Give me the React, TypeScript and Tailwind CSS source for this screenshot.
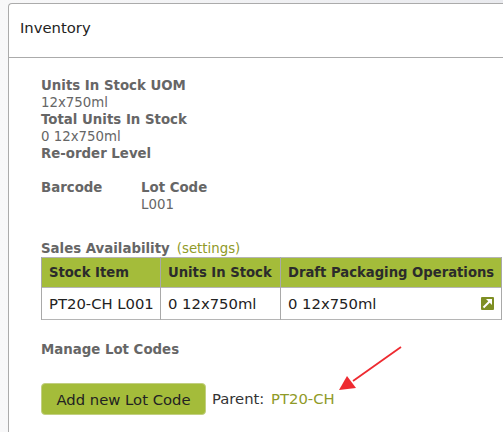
const font = { fontFamily: '"DejaVu Sans", Verdana, sans-serif' }

function ExternalIcon() {
  return (
    <span className="flex h-[13px] w-[13px] items-center justify-center rounded-[1px] bg-[#7f8f24]">
      <svg width="13" height="13" viewBox="0 0 13 13" fill="none">
        <path d="M2.5 10.5 L8.5 4.5" stroke="white" strokeWidth="2" />
        <path d="M5 2 H11 V8 Z" fill="white" />
      </svg>
    </span>
  )
}

function Arrow() {
  return (
    <svg className="absolute left-[335px] top-[345px]" width="70" height="50" viewBox="0 0 70 50" fill="none">
      <path d="M66 2 L18 36" stroke="#ee2a30" strokeWidth="1.8" />
      <path d="M4 45 L12 31 L21 43 Z" fill="#ee2a30" />
    </svg>
  )
}

export default function App() {
  const th = "h-[30px] border-l border-[#a9a9a9] px-[7px] text-left font-bold text-[13.2px] text-[#2b2b2b] whitespace-nowrap"
  const td = "h-[32px] border-l border-[#a9a9a9] px-[7px] text-[14.8px] text-[#222] whitespace-nowrap"

  return (
    <div className="relative h-[432px] w-[503px] overflow-hidden bg-gradient-to-r from-[#f8f8f9] to-[#e9eaee] pl-2 pt-[3px]" style={font}>
      <div className="h-full rounded-tl-[4px] border-l border-t border-[#ababab] bg-white">
        <div className="flex h-[54px] items-start border-b border-[#ababab] pl-[11px] pt-[14px] text-[14.8px] leading-[20px] text-[#222]">
          Inventory
        </div>

        <div className="pl-[32px] pt-[19px] text-[13.33px] leading-[17px] text-[#666]">
          <div className="font-bold">Units In Stock UOM</div>
          <div>12x750ml</div>
          <div className="font-bold">Total Units In Stock</div>
          <div>0 12x750ml</div>
          <div className="font-bold">Re-order Level</div>

          <div className="mt-[17px] flex h-[34px]">
            <div className="w-[100px] font-bold">Barcode</div>
            <div>
              <div className="font-bold">Lot Code</div>
              <div>L001</div>
            </div>
          </div>

          <div className="mt-[27px] flex gap-[7px]">
            <span className="font-bold">Sales Availability</span>
            <span className="text-[#8f9a28]">(settings)</span>
          </div>

          <table className="w-[460px] table-fixed border-collapse border-y border-[#b5b5b5]">
            <colgroup>
              <col className="w-[119px]" />
              <col className="w-[120px]" />
              <col className="w-[221px]" />
            </colgroup>
            <thead>
              <tr className="bg-[#a4bc3a]">
                <th className={th}>Stock Item</th>
                <th className={th}>Units In Stock</th>
                <th className={th + " border-r"}>Draft Packaging Operations</th>
              </tr>
            </thead>
            <tbody>
              <tr className="border-t border-[#b5b5b5]">
                <td className={td}>PT20-CH L001</td>
                <td className={td}>0 12x750ml</td>
                <td className={td + " border-r"}>
                  <div className="flex items-center justify-between">
                    0 12x750ml
                    <ExternalIcon />
                  </div>
                </td>
              </tr>
            </tbody>
          </table>

          <div className="mt-[21px] font-bold">Manage Lot Codes</div>

          <div className="mt-[25px] flex items-center gap-[6px]">
            <button className="h-[32px] w-[165px] rounded-[4px] border border-[#c2cf80] bg-[#a4bc3a] text-[14.8px] text-[#222]">
              Add new Lot Code
            </button>
            <span className="-mt-[2px] text-[14.8px] text-[#333]">
              Parent: <span className="ml-[2px] text-[#8f9a28]">PT20-CH</span>
            </span>
          </div>
        </div>
      </div>
      <Arrow />
    </div>
  )
}
